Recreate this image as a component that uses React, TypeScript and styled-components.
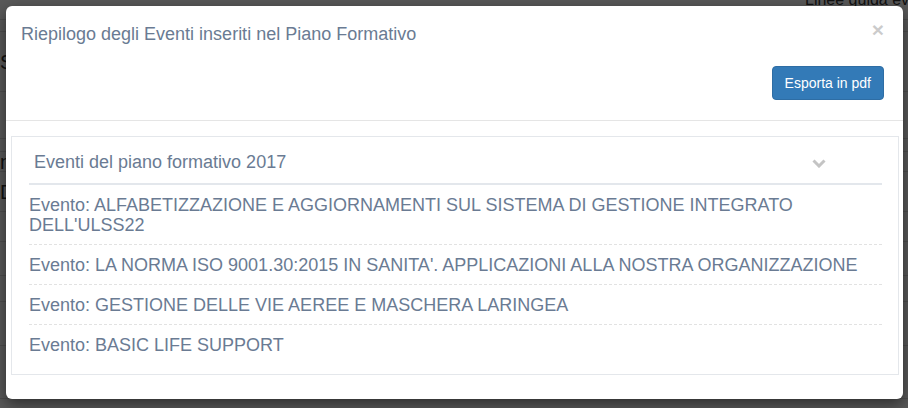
import React from "react";
import styled, { createGlobalStyle } from "styled-components";

const GlobalStyle = createGlobalStyle`
  html, body { margin: 0; padding: 0; }
  body {
    font-family: "Liberation Sans", Arial, Helvetica, sans-serif;
    background: #ffffff;
  }
  * { box-sizing: border-box; }
`;

const Viewport = styled.div`
  position: relative;
  width: 908px;
  height: 408px;
  overflow: hidden;
`;

/* page behind the modal */
const BgPage = styled.div`
  display: flex;
  flex-direction: column;
  width: 908px;
  height: 408px;
  background: #ffffff;
  color: #333;
  font-size: 15px;
`;

const BgTop = styled.div`
  display: flex;
  justify-content: flex-end;
  height: 30px;
  margin-top: -10px;
  border-bottom: 1px solid #dddddd;
`;

const BgLink = styled.span`
  width: 103px;
  white-space: nowrap;
  overflow: hidden;
  font-size: 16px;
  line-height: 20px;
  color: #333;
`;

const BgRow = styled.div<{ $h: number }>`
  display: flex;
  align-items: center;
  height: ${(p) => p.$h}px;
  border-bottom: 1px solid #dddddd;
  overflow: hidden;
`;

const BgText = styled.span`
  display: inline-block;
  width: 12px;
  overflow: hidden;
  font-size: 20px;
  line-height: 22px;
  color: #333;
`;

const Backdrop = styled.div`
  position: absolute;
  inset: 0;
  background: rgba(0, 0, 0, 0.65);
`;

const ModalLayer = styled.div`
  position: absolute;
  inset: 0;
  padding: 6px 5px 0 6px;
`;

const Modal = styled.div`
  width: 897px;
  background: #ffffff;
  border-radius: 6px;
  box-shadow: 0 5px 15px rgba(0, 0, 0, 0.5);
  color: #6a7b93;
`;

const Header = styled.div`
  display: flex;
  flex-direction: column;
  padding: 15px 19px 20px 15px;
  border-bottom: 1px solid #e5e5e5;
`;

const TitleRow = styled.div`
  display: flex;
  justify-content: space-between;
  align-items: flex-start;
`;

const Title = styled.h4`
  margin: 0;
  font-size: 18px;
  font-weight: normal;
  line-height: 26px;
  color: #6a7b93;
`;

const Close = styled.button`
  margin-top: -2px;
  padding: 0;
  border: 0;
  background: transparent;
  font-family: "Liberation Sans", Arial, sans-serif;
  font-size: 21px;
  font-weight: bold;
  line-height: 1;
  color: #000;
  opacity: 0.2;
  cursor: pointer;
`;

const Actions = styled.div`
  display: flex;
  justify-content: flex-end;
  margin-top: 19px;
`;

const PrimaryButton = styled.button`
  height: 34px;
  padding: 6px 12px;
  font-family: "Liberation Sans", Arial, sans-serif;
  font-size: 14px;
  line-height: 20px;
  color: #ffffff;
  background: #337ab7;
  border: 1px solid #2e6da4;
  border-radius: 4px;
  cursor: pointer;
`;

const Body = styled.div`
  padding: 15px 4px 24px 5px;
`;

const Panel = styled.div`
  border: 1px solid #e4e7eb;
  padding: 0 16px 10px 17px;
`;

const PanelHeading = styled.div`
  display: flex;
  justify-content: space-between;
  align-items: center;
  padding: 13px 0 9px 5px;
  border-bottom: 2px solid #e3e7ec;
`;

const PanelTitle = styled.span`
  font-size: 18px;
  line-height: 24px;
  color: #6a7b93;
`;

const Chevron = styled.svg`
  margin-right: 56px;
  margin-top: 2px;
`;

const List = styled.ul`
  list-style: none;
  margin: 0;
  padding: 0;
`;

const Item = styled.li`
  padding: 10px 0 9px;
  font-size: 18px;
  line-height: 20px;
  color: #6a7b93;
  border-bottom: 1px dashed #e2e2e2;
  &:last-child {
    border-bottom: 0;
  }
`;

const events = [
  "ALFABETIZZAZIONE E AGGIORNAMENTI SUL SISTEMA DI GESTIONE INTEGRATO DELL'ULSS22",
  "LA NORMA ISO 9001.30:2015 IN SANITA'. APPLICAZIONI ALLA NOSTRA ORGANIZZAZIONE",
  "GESTIONE DELLE VIE AEREE E MASCHERA LARINGEA",
  "BASIC LIFE SUPPORT",
];

const bgRows: { h: number; t: string }[] = [
  { h: 12, t: "" },
  { h: 60, t: "S)" },
  { h: 47, t: "" },
  { h: 13, t: "" },
  { h: 20, t: "n" },
  { h: 40, t: "D" },
  { h: 30, t: "" },
  { h: 34, t: "" },
  { h: 26, t: "" },
  { h: 44, t: "" },
  { h: 53, t: "" },
];

export default function App() {
  return (
    <>
      <GlobalStyle />
      <Viewport>
        <BgPage>
          <BgTop>
            <BgLink>Linee guida eventi</BgLink>
          </BgTop>
          {bgRows.map((r, i) => (
            <BgRow key={i} $h={r.h}>
              {r.t && <BgText>{r.t}</BgText>}
            </BgRow>
          ))}
        </BgPage>
        <Backdrop />
        <ModalLayer>
          <Modal>
            <Header>
              <TitleRow>
                <Title>Riepilogo degli Eventi inseriti nel Piano Formativo</Title>
                <Close aria-label="Chiudi">×</Close>
              </TitleRow>
              <Actions>
                <PrimaryButton>Esporta in pdf</PrimaryButton>
              </Actions>
            </Header>
            <Body>
              <Panel>
                <PanelHeading>
                  <PanelTitle>Eventi del piano formativo 2017</PanelTitle>
                  <Chevron width="14" height="9" viewBox="0 0 14 9">
                    <polyline
                      points="1.5,1.5 7,7 12.5,1.5"
                      fill="none"
                      stroke="#c4c4c4"
                      strokeWidth="3"
                    />
                  </Chevron>
                </PanelHeading>
                <List>
                  {events.map((e) => (
                    <Item key={e}>Evento: {e}</Item>
                  ))}
                </List>
              </Panel>
            </Body>
          </Modal>
        </ModalLayer>
      </Viewport>
    </>
  );
}
